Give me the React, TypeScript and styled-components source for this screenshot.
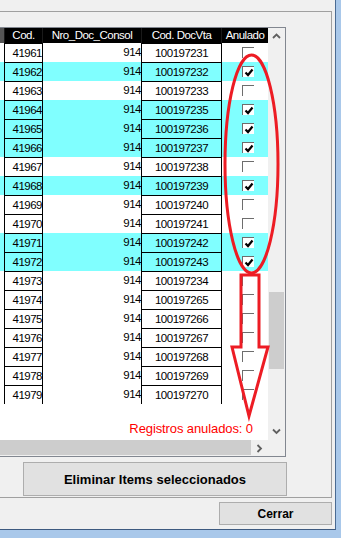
import React from "react";
import styled, { createGlobalStyle } from "styled-components";

const GlobalStyle = createGlobalStyle`
	html, body {
		margin: 0;
		padding: 0;
		overflow: hidden;
		background: #a9c8ea;
	}
	* {
		box-sizing: border-box;
	}
`;

interface Registro {
	cod: number;
	docVta: string;
	anulado: boolean;
}

const registros: Registro[] = [
	{ cod: 41961, docVta: "100197231", anulado: false },
	{ cod: 41962, docVta: "100197232", anulado: true },
	{ cod: 41963, docVta: "100197233", anulado: false },
	{ cod: 41964, docVta: "100197235", anulado: true },
	{ cod: 41965, docVta: "100197236", anulado: true },
	{ cod: 41966, docVta: "100197237", anulado: true },
	{ cod: 41967, docVta: "100197238", anulado: false },
	{ cod: 41968, docVta: "100197239", anulado: true },
	{ cod: 41969, docVta: "100197240", anulado: false },
	{ cod: 41970, docVta: "100197241", anulado: false },
	{ cod: 41971, docVta: "100197242", anulado: true },
	{ cod: 41972, docVta: "100197243", anulado: true },
	{ cod: 41973, docVta: "100197234", anulado: false },
	{ cod: 41974, docVta: "100197265", anulado: false },
	{ cod: 41975, docVta: "100197266", anulado: false },
	{ cod: 41976, docVta: "100197267", anulado: false },
	{ cod: 41977, docVta: "100197268", anulado: false },
	{ cod: 41978, docVta: "100197269", anulado: false },
	{ cod: 41979, docVta: "100197270", anulado: false }
];

const Frame = styled.div`
	position: relative;
	width: 341px;
	height: 538px;
	background: #a9c8ea;
`;

const Window = styled.div`
	width: 336px;
	height: 530px;
	background: #f0f0f0;
	border-right: 1px solid #4a6b93;
	border-bottom: 1px solid #3d5a80;
	padding-top: 11px;
	font-family: "Liberation Sans", Arial, sans-serif;
`;

const Panel = styled.div`
	width: 332px;
	border-top: 1px solid #a0a0a0;
	border-right: 1px solid #a0a0a0;
	border-bottom: 1px solid #a0a0a0;
	padding: 15px 0 1px 0;
`;

const GridBox = styled.div`
	margin-left: -5px;
	width: 291px;
	height: 430px;
	border: 1px solid #828790;
	display: grid;
	grid-template-columns: 272px 17px;
	grid-template-rows: 412px 16px;
	background: #f0f0f0;
`;

const Body = styled.div`
	display: flex;
	flex-direction: column;
	background: #fff;
	overflow: hidden;
	font-size: 11.5px;
	letter-spacing: -0.5px;
	color: #000;
`;

const HeaderRow = styled.div`
	display: flex;
	height: 15px;
	background: #000;
`;

const HeaderPrefix = styled.div`
	width: 8px;
	background: #555;
`;

const HeaderCell = styled.div<{ $w: number }>`
	width: ${(p) => p.$w}px;
	color: #fff;
	text-align: center;
	line-height: 15px;
	white-space: nowrap;
	border-left: 1px solid #1a1a1a;
`;

const Row = styled.div<{ $checked: boolean }>`
	display: flex;
	height: 19px;
	flex-shrink: 0;
	background: ${(p) => (p.$checked ? "#80ffff" : "#fff")};
`;

const Prefix = styled.div`
	width: 8px;
`;

const Cell = styled.div<{ $w: number; $align: "left" | "right" | "center"; $boxed?: boolean }>`
	width: ${(p) => p.$w}px;
	border-left: 1px solid #000;
	border-top: ${(p) => (p.$boxed ? "1px solid #000" : "none")};
	text-align: ${(p) => p.$align};
	line-height: 18px;
	white-space: nowrap;
`;

const CheckCell = styled.div`
	width: 47px;
	border-left: 1px solid #000;
	display: flex;
	align-items: center;
	padding-left: 20px;
`;

const CheckBox = styled.div<{ $checked: boolean }>`
	width: 12px;
	height: 11px;
	border-top: 1px solid #6d6d6d;
	border-left: 1px solid #6d6d6d;
	background: ${(p) => (p.$checked ? "#fff" : "transparent")};
	display: flex;
	align-items: center;
	justify-content: center;
`;

const Footer = styled.div`
	flex: 1;
	display: flex;
	align-items: flex-end;
	justify-content: flex-end;
	padding: 0 15px 4px 0;
`;

const Counter = styled.span`
	color: #ff0000;
	font-size: 13px;
	letter-spacing: -0.1px;
	line-height: 14px;
`;

const VScroll = styled.div`
	display: flex;
	flex-direction: column;
	background: #f0f0f0;
`;

const ScrollButton = styled.div<{ $size: number }>`
	flex: 0 0 ${(p) => p.$size}px;
	display: flex;
	align-items: center;
	justify-content: center;
`;

const VTrack = styled.div`
	flex: 1;
	display: flex;
	flex-direction: column;
	padding: 247px 1px 0 1px;
`;

const VThumb = styled.div`
	height: 77px;
	background: #cdcdcd;
`;

const HScroll = styled.div`
	display: flex;
	background: #f0f0f0;
`;

const HTrack = styled.div`
	flex: 1;
	padding: 0 0 1px 0;
	display: flex;
`;

const HThumb = styled.div`
	flex: 1;
	background: #cdcdcd;
`;

const Corner = styled.div`
	background: #f0f0f0;
`;

const Button = styled.button<{ $size: number }>`
	display: block;
	border: 1px solid #adadad;
	background: #e1e1e1;
	font-family: "Liberation Sans", Arial, sans-serif;
	font-weight: bold;
	font-size: ${(p) => p.$size}px;
	color: #000;
	padding: 0;
`;

const DeleteButton = styled(Button)`
	margin: 5px 0 0 23px;
	width: 264px;
	height: 34px;
`;

const CloseButton = styled(Button)`
	margin: 4px 0 0 219px;
	width: 113px;
	height: 23px;
`;

const Annotations = styled.svg`
	position: absolute;
	left: 0;
	top: 0;
	pointer-events: none;
`;

const Chevron = ({ dir }: { dir: "up" | "down" | "right" }) => {
	const points =
		dir === "up" ? "1,6 4.5,2.5 8,6" : dir === "down" ? "1,2.5 4.5,6 8,2.5" : "2.5,1 6,4.5 2.5,8";
	return (
		<svg width="9" height="9" viewBox="0 0 9 9">
			<polyline points={points} fill="none" stroke="#606060" strokeWidth="1.8" />
		</svg>
	);
};

const CheckMark = () => (
	<svg width="10" height="9" viewBox="0 0 10 9">
		<polyline points="1.5,4.5 4,7 8.5,1.5" fill="none" stroke="#000" strokeWidth="2.2" />
	</svg>
);

export default function App() {
	const anulados = 0;
	return (
		<>
			<GlobalStyle />
			<Frame>
				<Window>
					<Panel>
						<GridBox>
							<Body>
								<HeaderRow>
									<HeaderPrefix />
									<HeaderCell $w={38}>Cod.</HeaderCell>
									<HeaderCell $w={99}>Nro_Doc_Consol</HeaderCell>
									<HeaderCell $w={80}>Cod. DocVta</HeaderCell>
									<HeaderCell $w={47}>Anulado</HeaderCell>
								</HeaderRow>
								{registros.map((r) => (
									<Row key={r.cod} $checked={r.anulado}>
										<Prefix />
										<Cell $w={38} $align="right" $boxed>
											{r.cod}
										</Cell>
										<Cell $w={99} $align="right">
											914
										</Cell>
										<Cell $w={80} $align="center" $boxed>
											{r.docVta}
										</Cell>
										<CheckCell>
											<CheckBox $checked={r.anulado}>{r.anulado && <CheckMark />}</CheckBox>
										</CheckCell>
									</Row>
								))}
								<Footer>
									<Counter>Registros anulados: {anulados}</Counter>
								</Footer>
							</Body>
							<VScroll>
								<ScrollButton $size={17}>
									<Chevron dir="up" />
								</ScrollButton>
								<VTrack>
									<VThumb />
								</VTrack>
								<ScrollButton $size={17}>
									<Chevron dir="down" />
								</ScrollButton>
							</VScroll>
							<HScroll>
								<HTrack>
									<HThumb />
								</HTrack>
								<ScrollButton $size={17}>
									<Chevron dir="right" />
								</ScrollButton>
							</HScroll>
							<Corner />
						</GridBox>
						<DeleteButton $size={13}>Eliminar Items seleccionados</DeleteButton>
					</Panel>
					<CloseButton $size={12}>Cerrar</CloseButton>
				</Window>
				<Annotations width="341" height="538" viewBox="0 0 341 538">
					<ellipse cx="251.5" cy="164" rx="26.5" ry="109" fill="none" stroke="#ed1c24" strokeWidth="3" />
					<polygon
						points="241,275 259,275 259,347 268,347 249,416 232,347 241,347"
						fill="none"
						stroke="#ed1c24"
						strokeWidth="3"
						strokeLinejoin="miter"
					/>
				</Annotations>
			</Frame>
		</>
	);
}
